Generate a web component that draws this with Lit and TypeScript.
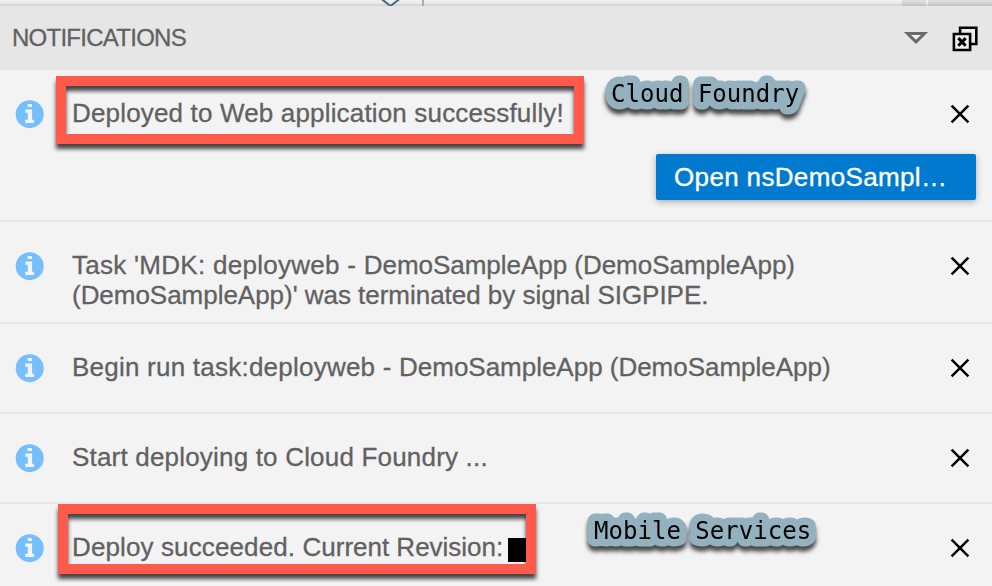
import { LitElement, html, css, svg, nothing } from "lit";
import { customElement, property } from "lit/decorators.js";

interface Run {
  text: string;
  spacing: number;
}
interface Note {
  lines: Run[][];
  action?: string;
  redacted?: boolean;
}

const NOTES: Note[] = [
  { lines: [[{ text: "Deployed to Web application successfully!", spacing: 0.165 }]], action: "Open nsDemoSampl…" },
  {
    lines: [
      [
        { text: "Task 'MDK: deployweb - ", spacing: 0.28 },
        { text: "DemoSampleApp (DemoSampleApp)", spacing: -0.03 },
      ],
      [{ text: "(DemoSampleApp)' was terminated by signal SIGPIPE.", spacing: -0.03 }],
    ],
  },
  {
    lines: [
      [
        { text: "Begin run task:deployweb - ", spacing: 0.23 },
        { text: "DemoSampleApp (DemoSampleApp)", spacing: -0.02 },
      ],
    ],
  },
  { lines: [[{ text: "Start deploying to Cloud Foundry ...", spacing: 0.19 }]] },
  {
    lines: [
      [
        { text: "Deploy succeeded. ", spacing: 0.12 },
        { text: "Current Revision:", spacing: -0.01 },
      ],
    ],
    redacted: true,
  },
];

@customElement("notification-row")
export class NotificationRow extends LitElement {
  @property({ attribute: false }) note!: Note;

  static styles = css`
    :host { display: block; box-sizing: border-box; border-bottom: 2px solid #e6e6e6; padding: 29px 16px 0 15px; }
    .main { display: flex; align-items: flex-start; }
    .info { width: 30px; height: 30px; flex: none; }
    .text { flex: 1; margin: -1px 0 1px 27px; font-size: 26px; line-height: 30px; color: #616161; white-space: pre;
      -webkit-text-stroke: .3px #616161; }
    .line { display: flex; }
    .redaction { width: 22px; height: 24px; margin: 6px 0 0 5px; background: #000; }
    .close { width: 32px; height: 32px; flex: none; }
    .actions { display: flex; justify-content: flex-end; margin-top: 23px; }
    .button { box-sizing: border-box; width: 320px; height: 46px; padding: 0 0 0 18px; border: 0; border-radius: 2px;
      background: #007acf; color: #fff; font: 26px/46px "Liberation Sans", Arial, sans-serif; letter-spacing: .35px;
      text-align: left; white-space: nowrap; box-shadow: 0 2px 6px rgba(0, 0, 0, .3); -webkit-text-stroke: .35px #fff; }
  `;

  render() {
    const n = this.note;
    return html`
      <div class="main">
        <svg class="info" viewBox="0 0 30 30">
          <circle cx="14.7" cy="15.2" r="14" fill="#75beff" />
          <path fill="#f3f3f3" d="M12.7 4.9h4.2v3.2h-4.2zM10.3 10.5h6.8v10.3h2v3.2H10.3v-3.2h2.5v-7.1h-2.5z" />
        </svg>
        <div class="text">${n.lines.map((runs) => html`<div class="line">${runs.map((r) => html`<span style="letter-spacing:${r.spacing}px">${r.text}</span>`)}${n.redacted ? html`<i class="redaction"></i>` : nothing}</div>`)}</div>
        <svg class="close" viewBox="0 0 32 32">
          <path d="M7.6 6.6l16.8 16.8M24.4 6.6L7.6 23.4" stroke="#000" stroke-width="2.5" />
        </svg>
      </div>
      ${n.action ? html`<div class="actions"><button class="button">${n.action}</button></div>` : nothing}
    `;
  }
}

@customElement("app-root")
export class AppRoot extends LitElement {
  static styles = css`
    :host { display: block; position: relative; width: 992px; height: 586px; overflow: hidden; background: #f3f3f3;
      font-family: "Liberation Sans", Arial, sans-serif; }
    .strip { display: block; width: 992px; height: 6px; }
    .header { display: flex; align-items: center; box-sizing: border-box; height: 64px; padding: 0 12px; background: #e6e6e6; }
    .title { flex: 1; margin: 0; font-size: 24px; font-weight: 400; color: #616161; letter-spacing: -.74px;
      -webkit-text-stroke: .3px #616161; }
    .tools { width: 80px; height: 64px; flex: none; }
    .list { display: grid; grid-template-rows: 152px 102px 90px 90px 90px; }
    .marks { position: absolute; inset: 0; pointer-events: none; }
    .frame { fill: none; stroke: #ff5a4c; stroke-width: 10; filter: drop-shadow(0 5px 2px rgba(0, 0, 0, .72)); }
    .label { font: 24px "DejaVu Sans Mono", monospace; letter-spacing: .03px; fill: #000; stroke: #93b1bf;
      stroke-width: 15; stroke-linejoin: round; paint-order: stroke; filter: drop-shadow(0 5px 2px rgba(0, 0, 0, .7)); }
  `;

  render() {
    return html`
      <svg class="strip" viewBox="0 0 992 6">
        <defs><linearGradient id="fade" x2="0" y2="1"><stop offset="0" stop-color="#f2f2f2" /><stop offset=".5" stop-color="#e9e9e9" /><stop offset="1" stop-color="#cfcfcf" /></linearGradient></defs>
        <path fill="url(#fade)" d="M0 0h992v6H0z" />
        <path d="M902 0h24v6h-24zM928 0h64v6h-64z" fill="#000" opacity=".08" />
        <path d="M381.5-1l9 7 9-7" fill="none" stroke="#496983" stroke-width="2" />
        <path d="M422 0h2v6h-2z" fill="#aaa" />
      </svg>
      <header class="header">
        <h1 class="title">NOTIFICATIONS</h1>
        <svg class="tools" viewBox="900 6 80 64">
          <path d="M908 33.5h17l-8.5 8.3z" transform="translate(-.5)" fill="#f3f3f3" stroke="#6b6b6b" stroke-width="3" />
          <path d="M960.1 33V27.7h16.2V44H971" fill="#efe8ed" stroke="#000" stroke-width="2.6" />
          <path d="M953.9 34h16.2v16h-16.2z" fill="#f0f0f0" stroke="#000" stroke-width="2.6" />
          <path d="M958.3 38.1l7.4 7.6M965.7 38.1l-7.4 7.6" stroke="#000" stroke-width="3" />
        </svg>
      </header>
      <div class="list">${NOTES.map((n) => html`<notification-row .note=${n}></notification-row>`)}</div>
      <svg class="marks" width="992" height="586">
        ${svg`
          <rect class="frame" x="61" y="81" width="518" height="58" />
          <rect class="frame" x="63" y="509" width="468" height="60" />
          <text class="label" x="611" y="102">Cloud Foundry</text>
          <text class="label" x="594" y="539">Mobile Services</text>`}
      </svg>
    `;
  }
}
